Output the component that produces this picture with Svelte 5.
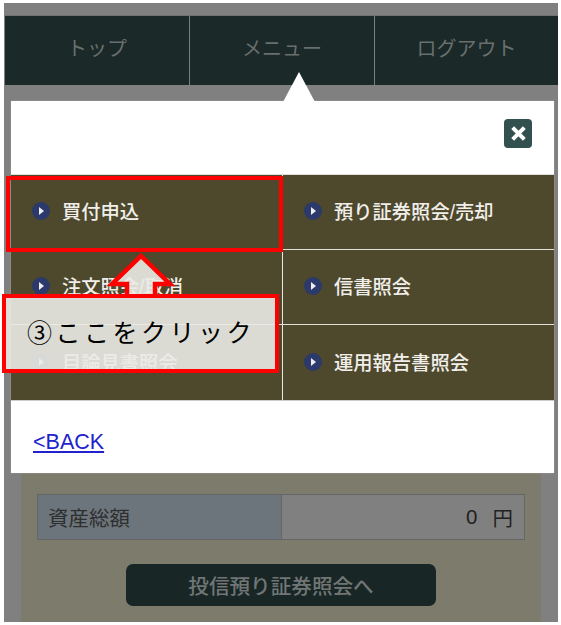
<script>
  const tabs = ['トップ', 'メニュー', 'ログアウト'];
  const menu = [
    '買付申込',
    '預り証券照会/売却',
    '注文照会/取消',
    '信書照会',
    '目論見書照会',
    '運用報告書照会'
  ];
</script>

<div class="screen">
  <nav class="tabs">
    {#each tabs as tab}
      <div class="tab">{tab}</div>
    {/each}
  </nav>

  <div class="content">
    <div class="asset-row">
      <div class="asset-label">資産総額</div>
      <div class="asset-value"><span>0</span><span>円</span></div>
    </div>
    <button class="btn-holdings">投信預り証券照会へ</button>
  </div>

  <div class="modal">
    <div class="modal-pointer"></div>
    <div class="modal-head">
      <button class="modal-close" aria-label="閉じる">
        <svg viewBox="0 0 16 16" width="17" height="17">
          <path d="M2.5 2.5 L13.5 13.5 M13.5 2.5 L2.5 13.5" stroke="#fff" stroke-width="3.8" fill="none" />
        </svg>
      </button>
    </div>
    <div class="menu">
      {#each menu as item}
        <div class="menu-item">
          <svg class="bullet" viewBox="0 0 18 18" width="18" height="18">
            <circle cx="9" cy="9" r="9" fill="#2b3a6b" />
            <path d="M7 5 L12 9 L7 13 Z" fill="#eee" />
          </svg>
          <span>{item}</span>
        </div>
      {/each}
    </div>
    <div class="modal-foot">
      <a href="#back">&lt;BACK</a>
    </div>
  </div>

  <!-- red callout drawn over the screenshot -->
  <div class="mark-target"></div>
  <svg class="mark-arrow" viewBox="0 0 74 46" width="74" height="46">
    <path d="M23 46 L23 34 L8 34 L37 6 L66 34 L51 34 L51 46 Z" fill="rgba(235,235,230,0.9)" />
    <path d="M23 46 L23 34 L8 34 L37 6 L66 34 L51 34 L51 46" fill="none" stroke="#f00" stroke-width="4.5" />
  </svg>
  <div class="mark-note">③ここをクリック</div>
</div>

<style>
  :global(body) {
    margin: 0;
    background: #fff;
  }

  .screen {
    position: relative;
    box-sizing: border-box;
    display: flex;
    flex-direction: column;
    width: 554px;
    height: 619px;
    margin: 3px 0 0 4px;
    padding-top: 12px;
    background: #808080;
    font-family: "Liberation Sans", "Noto Sans CJK JP", sans-serif;
  }

  .tabs {
    display: grid;
    grid-template-columns: 185px 185px 1fr;
    height: 70px;
    margin-left: 1px;
    background: #1b2929;
    border-top: 1px solid #6e7372;
    box-sizing: border-box;
  }

  .tab {
    display: flex;
    align-items: center;
    justify-content: center;
    padding-bottom: 6px;
    font-size: 20px;
    color: #686f6e;
    border-right: 1px solid #7a7f7e;
  }

  .tab:last-child {
    border-right: none;
  }

  .content {
    flex: 1;
    min-height: 0;
    margin: 17px 17px 0;
    padding: 392px 16px 0 16px;
    background: #7d7c6c;
  }

  .asset-row {
    display: flex;
    height: 46px;
    box-sizing: border-box;
    border: 1px solid #666;
    font-size: 20.5px;
  }

  .asset-label {
    width: 244px;
    display: flex;
    align-items: center;
    padding-left: 10px;
    box-sizing: border-box;
    background: #6c757b;
    border-right: 1px solid #666;
    color: #2f2f2f;
  }

  .asset-value {
    flex: 1;
    display: flex;
    align-items: center;
    justify-content: flex-end;
    gap: 15px;
    padding-right: 11px;
    background: #808080;
    color: #222;
  }

  .btn-holdings {
    display: block;
    width: 310px;
    height: 42px;
    margin: 24px auto 0;
    border: none;
    border-radius: 7px;
    background: #182626;
    color: #717675;
    font-family: inherit;
    font-size: 20.6px;
    font-weight: 500;
  }

  .modal {
    position: absolute;
    left: 7px;
    top: 98px;
    width: 543px;
    background: #fff;
    box-shadow: 0 0 1px #bbb;
  }

  .modal-pointer {
    position: absolute;
    left: 272px;
    top: -29px;
    width: 0;
    height: 0;
    border-left: 16px solid transparent;
    border-right: 16px solid transparent;
    border-bottom: 30px solid #fff;
  }

  .modal-head {
    display: flex;
    justify-content: flex-end;
    height: 73px;
    padding: 18px 22px 0 0;
    box-sizing: border-box;
  }

  .modal-close {
    display: flex;
    align-items: center;
    justify-content: center;
    width: 28px;
    height: 29px;
    padding: 0;
    border: none;
    border-radius: 4px;
    background: #335050;
  }

  .menu {
    display: grid;
    grid-template-columns: 272px 1fr;
    grid-auto-rows: 75px;
    background: #4e482d;
    border-top: 1px solid #ddd;
    border-bottom: 1px solid #ccc;
  }

  .menu-item {
    display: flex;
    align-items: center;
    gap: 12px;
    padding: 0 0 2px 21px;
    box-sizing: border-box;
    font-size: 19.3px;
    font-weight: 500;
    color: #f0efea;
    border-bottom: 1px solid #e0dfd8;
  }

  .menu-item:nth-child(odd) {
    border-right: 1px solid #e8e7e0;
  }

  .menu-item:nth-last-child(-n + 2) {
    border-bottom: none;
  }

  .modal-foot {
    height: 72px;
    padding: 29px 0 0 22px;
    box-sizing: border-box;
    font-size: 21.5px;
  }

  .modal-foot a {
    color: #2222cc;
  }

  .mark-target {
    position: absolute;
    left: 2px;
    top: 173px;
    width: 277px;
    height: 76px;
    box-sizing: border-box;
    border: 4px solid #f00;
  }

  .mark-arrow {
    position: absolute;
    left: 100px;
    top: 247px;
  }

  .mark-note {
    position: absolute;
    left: -2px;
    top: 291px;
    width: 277px;
    height: 79px;
    box-sizing: border-box;
    display: flex;
    align-items: center;
    padding: 0 0 6px 21px;
    border: 4px solid #f00;
    background: rgba(235, 235, 230, 0.9);
    font-family: "Liberation Serif", "Noto Sans CJK JP", serif;
    font-size: 25px;
    letter-spacing: 3.5px;
    color: #000;
  }
</style>
